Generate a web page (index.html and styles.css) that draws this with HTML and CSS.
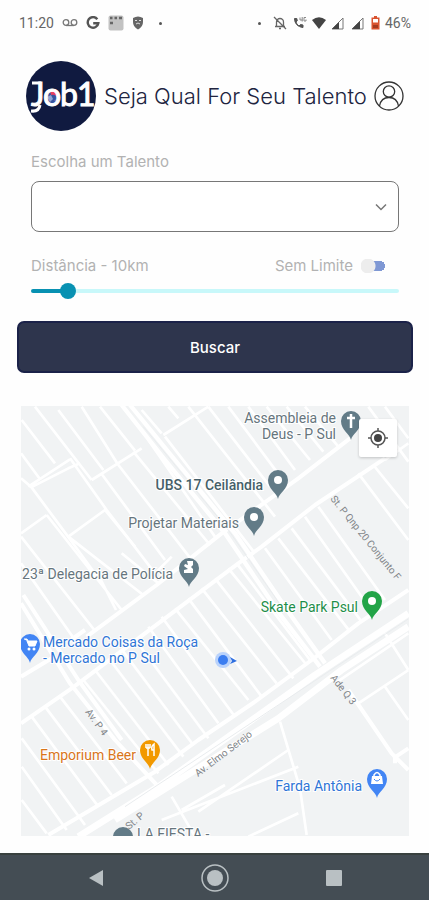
FILE: index.html
```html
<!DOCTYPE html>
<html lang="pt-BR">
<head>
<meta charset="utf-8">
<meta name="viewport" content="width=device-width, initial-scale=1">
<title>Job1</title>
<link rel="stylesheet" href="styles.css">
</head>
<body>
<div class="status">
  <div class="status-group">
    <span>11:20</span>
    <svg class="icon-voicemail" viewBox="0 0 16 14" fill="none" stroke="#777" stroke-width="1.3"><circle cx="4" cy="6.500" r="2.800"/><circle cx="12" cy="6.500" r="2.800"/><path d="M4 9.500h8"/></svg>
    <svg class="icon-google" viewBox="0 0 14 14" fill="none" stroke="#555" stroke-width="2.400"><path d="M11.300 3.200A5.300 5.300 0 1 0 12.300 7.200H7.200"/></svg>
    <svg class="icon-calendar" viewBox="0 0 16 16"><rect x=".5" y=".5" width="15" height="15" rx="2" fill="#c2c2c2"/><path d="M2 3h2.500M6.500 3H9M11 3h3M2 8h3" stroke="#666" stroke-width="2.500"/></svg>
    <svg class="icon-shield" viewBox="0 0 12 14"><path d="M1 2q5-3 10 0v4q0 5-5 7.500Q1 11 1 6z" fill="#666"/><path d="M3 4.500h2M7 4.500h2M4 8l2-1 2 1" stroke="#ddd" fill="none"/></svg>
    <i class="dot"></i>
  </div>
  <div class="status-group status-right">
    <i class="dot"></i>
    <svg class="icon-bell" viewBox="0 0 14 14" fill="none" stroke="#666" stroke-width="1.300"><path d="M3.500 10.500V6a3.500 3.500 0 0 1 7 0v4.500M2 10.500h10M6 12.500h2M1 1l12 12"/></svg>
    <svg class="icon-call" viewBox="0 0 15 14"><path d="M2.500 2.500c0 5 3.500 8.500 8.500 9V9l-2.500-.5L7 10Q4.500 8.500 4 6l1.300-1.200L4.800 2.500z" fill="#555" stroke="#555"/><path d="M8 1.500v2.500h2.500M10.200 1v4.500M14 1.500h-2v3.500h2V3.500" fill="none" stroke="#888"/></svg>
    <svg class="icon-wifi" viewBox="0 0 14 12"><path d="M0 3Q7-2.500 14 3L7 12z" fill="#444"/></svg>
    <svg class="icon-signal" viewBox="0 0 13 13"><path d="M1 12L12 1v11z" fill="none" stroke="#777"/><path d="M1 12l7-7v7z" fill="#444"/></svg>
    <svg class="icon-signal" viewBox="0 0 13 13"><path d="M1 12L12 1v11z" fill="none" stroke="#777"/><path d="M1 12l8-8v8z" fill="#444"/></svg>
    <svg class="icon-battery" viewBox="0 0 9 14"><path d="M3 0h3v1.500h2.500v12H.5v-12H3z" fill="#d9532f"/><path d="M2 3h5v3.500H2z" fill="#fff"/><path d="M2 9h5v3H2z" fill="#a33b22"/></svg>
    <span>46%</span>
  </div>
</div>

<main class="screen">
  <header class="header">
    <svg class="logo" viewBox="0 0 70 70" role="img" aria-label="Job1">
      <circle cx="35" cy="35" r="35" fill="#101a40"/>
      <circle cx="27" cy="36" r="7" fill="#36549e"/>
      <path d="M24 29q8-3 10 5 0 3-3 3-1-4-6-3z" fill="#e6425f"/>
      <path d="M21 36l4-2 2 4-3 3z" fill="#90a4d4"/>
      <path d="M28 39l5-1-3 4z" fill="#7a62a8"/>
      <text class="logo-text" y="45" x="5 17 34 51">Job1</text>
      <path d="M6 22h9M14 44q-1 7-9 6" fill="none" stroke="#fff" stroke-width="3"/>
    </svg>
    <h1 class="title">Seja Qual For Seu Talento</h1>
    <button class="profile" type="button" aria-label="Perfil">
      <svg viewBox="0 0 30 30" fill="none" stroke="#333" stroke-width="1.300"><circle cx="15" cy="15" r="14"/><circle cx="15" cy="10.500" r="5.700"/><path d="M5.500 25Q7 16.500 15 16.500T24.500 25"/></svg>
    </button>
  </header>

  <form class="filters">
    <label class="label" for="talent">Escolha um Talento</label>
    <div class="select-wrap">
      <select id="talent" class="select"><option></option></select>
      <svg class="chevron" viewBox="0 0 12 8" fill="none" stroke="#777" stroke-width="1.500"><path d="M1 1.500l5 5 5-5"/></svg>
    </div>
    <div class="distance">
      <label class="label" for="range">Distância - 10km</label>
      <label class="label limit">Sem Limite <input class="switch" type="checkbox"></label>
    </div>
    <input id="range" class="range" type="range" min="0" max="120" value="10">
  </form>
  <button class="search" type="button">Buscar</button>

  <section class="map" aria-label="Mapa">
    <svg class="map-canvas" viewBox="0 0 388 430" preserveAspectRatio="xMidYMid slice">
      <defs>
        <path id="pin" d="M0 19C-1 13-10 9-10 0A10 10 0 1 1 10 0C10 9 1 13 0 19Z"/>
      </defs>
      <rect width="388" height="430" fill="#f1f3f4"/>
      <g transform="translate(-6 -6) scale(.33333)" fill="none" stroke="#fff" stroke-linejoin="round">
        <g stroke-width="8">
          <path d="M20 60l100 130M60 20l170 220M130 30l135 180M200 20l108 172M255 20l105 132M18 160l55 75M18 235l30 25 115 155 80 110M165 175l110 155 145 190M260 222l190 258M308 192l216 280M355 155l230 280M380 30l60 70M460 20l30 35"/>
          <path d="M520 20l260 330M580 20l185 240M450 110l270 350M400 120l200 290"/>
          <path d="M640 20l160 215M700 20l140 190M755 20l130 160M815 20l110 135M870 20l100 120M1060 20l120 165M1110 20l70 95"/>
          <path d="M40 260L165 178M48 262L160 205 195 190M230 240L380 145M445 105L580 20M18 400L95 345M160 410L270 330L360 440"/>
          <path d="M18 490l155 220M18 410l220 280M95 345l225 285M160 410l225 175M243 510l60 120M320 460l110 90M420 520l50-50"/>
          <path d="M750 445l200 275M790 415l215 280M830 385l210 280M870 350l205 290M910 320l200 280M1030 220l150 200M1075 195l105 130M1110 180l70-50"/>
          <path d="M400 680l210 290M440 650l220 300M480 625l220 275M520 595l220 295M560 565l225 285M600 535l235 300M640 505l235 290M665 490l220 290"/>
          <path d="M20 1015l190 260M50 950l200 270M90 920l200 265M135 890l200 260M20 1100l135 190M20 1200l75 100"/>
          <path d="M205 840l225 280M240 810l220 285M285 780l220 290M325 755l210 280M365 725l215 290"/>
          <path d="M795 965l60 200 20 140M550 1235L820 1050M440 1260L850 1100M700 1310L850 1240M470 1190l70 120M500 1230l130-75M1030 910L1180 810M1110 860l70 100M1110 700l70 110M960 850l220-150"/>
        </g>
        <g stroke-width="12">
          <path d="M215 710L425 555 620 400 850 235 1005 115M170 865L350 730 670 490 740 440 900 315 1110 175M18 830L110 775M18 970L170 865M210 690l-50 35"/>
          <path d="M100 1305L420 1115 550 1020 720 905 890 780 1030 670 1180 570"/>
          <path d="M18 610L165 850 300 1020 430 1160M25 585L190 840 320 1020"/>
          <path d="M1000 870l130 190 50 50M1135 1075l45-30M1140 1065v25"/>
        </g>
        <path d="M320 15L450 180 630 400 800 650 915 800M345 15L480 180 660 400 820 635 930 790" stroke-width="13"/>
        <path d="M190 1310L430 1160 900 825 1180 640M300 1260L790 955 980 810 1180 680" stroke-width="20"/>
        <path d="M330 1220L900 842 1180 657M385 80L640 390 810 635" stroke="#e9ecee" stroke-width="3"/>
      </g>

      <g class="street">
        <text transform="translate(309 93) rotate(51)">St. P Qnp 20 Conjunto F</text>
        <text transform="translate(309 272) rotate(52)">Ade Q 3</text>
        <text transform="translate(64 306) rotate(54)">Av. P 4</text>
        <text transform="translate(177 371) rotate(-37)">Av. Elmo Serejo</text>
        <text transform="translate(108 424) rotate(-40)">St. P</text>
      </g>

      <g fill="#627b87">
        <use href="#pin" x="330" y="15"/><use href="#pin" x="257" y="74"/><use href="#pin" x="233" y="111"/><use href="#pin" x="168" y="162"/><use href="#pin" x="102" y="431"/>
      </g>
      <use href="#pin" x="351" y="195" fill="#22a447"/>
      <use href="#pin" x="9" y="238" fill="#4285f4"/>
      <use href="#pin" x="356" y="373" fill="#4285f4"/>
      <use href="#pin" x="129" y="344" fill="#f29900"/>
      <g fill="#fff"><circle cx="257" cy="74" r="4"/><circle cx="233" cy="111" r="4"/><circle cx="351" cy="195" r="4"/></g>
      <path d="M330 8v14M326 12h8" stroke="#fff" stroke-width="2.500"/>
      <path d="M166 155h6v4l-2 2 2 2v4h-9v-3l4-1-4-3 1-2 3 1z" fill="#fff"/>
      <path d="M3 233h3l1 2h9l-2 5H8l-2-5" fill="#fff" stroke="#fff"/><g fill="#fff"><circle cx="8" cy="243" r="1.500"/><circle cx="13" cy="243" r="1.500"/></g>
      <path d="M125 338v4M127 338v4M129 338v4M125 342h4M127 342v8M133 350v-12q-3 2-2 6h2" fill="none" stroke="#fff" stroke-width="1.500"/>
      <path d="M351 370h10l1 8h-12z" fill="#fff"/><path d="M353 371v-2q3-5 6 0v2" fill="none" stroke="#fff" stroke-width="1.500"/><path d="M353 373q3 4 6 0" fill="none" stroke="#4285f4"/>

      <g class="place">
        <text x="315" y="17" text-anchor="end">Assembleia de</text>
        <text x="315" y="33" text-anchor="end">Deus - P Sul</text>
        <text class="place-strong" x="242" y="84" text-anchor="end">UBS 17 Ceilândia</text>
        <text x="218" y="122" text-anchor="end">Projetar Materiais</text>
        <text x="152" y="173" text-anchor="end">23ª Delegacia de Polícia</text>
        <text class="green" x="337" y="206" text-anchor="end">Skate Park Psul</text>
        <text class="blue" x="22" y="241">Mercado Coisas da Roça</text>
        <text class="blue" x="22" y="257">- Mercado no P Sul</text>
        <text class="orange" x="115" y="354" text-anchor="end">Emporium Beer</text>
        <text class="blue" x="341" y="385" text-anchor="end">Farda Antônia</text>
        <text x="116" y="433">LA FIESTA -</text>
      </g>
      <circle cx="202" cy="254" r="8" fill="#b9d2fb"/><circle cx="202" cy="254" r="5" fill="#3b7df0"/><path d="M209 251l7 4-7 3 2-3z" fill="#2f6fe0"/>
    </svg>
    <button class="locate" type="button" aria-label="Minha localização">
      <svg viewBox="0 0 20 20"><circle cx="10" cy="10" r="7" fill="none" stroke="#555" stroke-width="1.500"/><circle cx="10" cy="10" r="4" fill="#444"/><path d="M10 0v3M10 17v3M0 10h3M17 10h3" stroke="#555" stroke-width="1.500"/></svg>
    </button>
  </section>
</main>

<nav class="navbar" aria-label="Sistema">
  <button type="button" aria-label="Voltar"><svg viewBox="0 0 28 28"><path d="M21 6v16L7 14z" fill="#b9c0c3"/></svg></button>
  <button type="button" aria-label="Início"><svg viewBox="0 0 28 28"><circle cx="14" cy="14" r="13" fill="none" stroke="#b9c0c3" stroke-width="1.500"/><circle cx="14" cy="14" r="8" fill="#b9c0c3"/></svg></button>
  <button type="button" aria-label="Recentes"><svg viewBox="0 0 28 28"><rect x="6" y="6" width="16" height="16" rx="1" fill="#b9c0c3"/></svg></button>
</nav>
</body>
</html>
```
FILE: styles.css
```css
* { box-sizing: border-box; }

body {
  margin: 0;
  min-height: 100vh;
  display: flex;
  flex-direction: column;
  background: #fefefe;
  font-family: Inter, "Open Sans", sans-serif;
}

button {
  padding: 0;
  border: 0;
  background: none;
  font: inherit;
}

svg { display: block; }

.status {
  display: flex;
  justify-content: space-between;
  padding: 14px 18px 0 19px;
  color: #666;
  font: 14px/18px Roboto, sans-serif;
}

.status-group {
  display: flex;
  align-items: center;
  gap: 8px;
}

.status-right { gap: 5px; }
.dot { width: 3px; height: 3px; margin: 0 7px; border-radius: 50%; background: #555; }
.icon-voicemail { width: 16px; }
.icon-google { width: 14px; }
.icon-calendar { width: 16px; }
.icon-shield { width: 12px; }
.icon-bell { width: 14px; }
.icon-call { width: 15px; }
.icon-wifi { width: 14px; }
.icon-signal { width: 13px; margin-right: 2px; }
.icon-battery { width: 9px; }

.screen { flex: 1; padding: 29px 16px 17px 17px; }

.header {
  display: flex;
  align-items: center;
  gap: 8px;
  padding: 0 9px;
}

.logo { width: 70px; height: 70px; flex: none; }
.logo-text { font: 32px Lato, sans-serif; fill: #fff; stroke: #fff; stroke-width: 1px; }

.title {
  flex: 1;
  min-width: 0;
  margin: 0;
  color: #20243f;
  font-size: 22px;
  font-weight: 300;
  line-height: 28px;
  white-space: nowrap;
}

.profile { width: 30px; height: 30px; flex: none; }

.filters { padding: 20px 14px 0; }

.label {
  display: block;
  color: #b2b2b2;
  font-size: 15px;
  line-height: 22px;
}

.select-wrap { position: relative; margin-top: 8px; }

.select {
  display: block;
  width: 100%;
  height: 51px;
  padding: 0 40px 0 16px;
  appearance: none;
  border: 1px solid #777;
  border-radius: 8px;
  background: #fff;
  font: inherit;
}

.chevron {
  position: absolute;
  top: 22px;
  right: 12px;
  width: 12px;
  pointer-events: none;
}

.distance {
  display: flex;
  justify-content: space-between;
  margin-top: 23px;
  padding-right: 14px;
}

.limit { display: flex; align-items: center; gap: 8px; }

.switch {
  width: 24px;
  height: 14px;
  margin: 0;
  appearance: none;
  background: radial-gradient(circle at 7px 7px, #ededed 7px, transparent 8px), linear-gradient(#7f98d4, #7f98d4) 6px 2px / 13px 10px no-repeat, radial-gradient(circle at 19px 7px, #7f98d4 5px, transparent 5px);
}

.range {
  display: block;
  width: 100%;
  height: 16px;
  margin: 6px 0 0;
  appearance: none;
  background: none;
}

.range::-webkit-slider-runnable-track {
  height: 4px;
  border-radius: 2px;
  background: linear-gradient(to right, #0891b2 10%, #c8f8fa 10%);
}

.range::-webkit-slider-thumb {
  width: 16px;
  height: 16px;
  margin-top: -6px;
  appearance: none;
  border-radius: 50%;
  background: #0891b2;
}

.search {
  display: block;
  width: 100%;
  height: 52px;
  margin-top: 22px;
  border: 2px solid #1b2249;
  border-radius: 7px;
  background: #2e354d;
  color: #fff;
  font-size: 15px;
  font-weight: 500;
}

.map {
  position: relative;
  margin: 33px 4px 0;
  overflow: hidden;
}

.map-canvas { width: 100%; height: auto; }
.street { fill: #808488; font: 10px Roboto, sans-serif; }
.place {
  fill: #66757d;
  stroke: #fff;
  stroke-width: 2px;
  paint-order: stroke;
  font: 14px Roboto, sans-serif;
}
.place-strong { fill: #455f69; font-weight: 500; }
.green { fill: #1e8e4a; }
.blue { fill: #2f75d6; }
.orange { fill: #d9751a; }

.locate {
  position: absolute;
  top: 13px;
  right: 12px;
  display: grid;
  place-items: center;
  width: 38px;
  height: 38px;
  border-radius: 2px;
  background: #fff;
  box-shadow: 0 1px 3px #0003;
}

.locate svg { width: 20px; }

.navbar {
  display: grid;
  grid-template-columns: repeat(3, 1fr);
  height: 48px;
  padding: 0 36px;
  border-top: 2px solid #39413f;
  background: #444d54;
}

.navbar button { display: grid; place-items: center; }
.navbar svg { width: 28px; }
```
